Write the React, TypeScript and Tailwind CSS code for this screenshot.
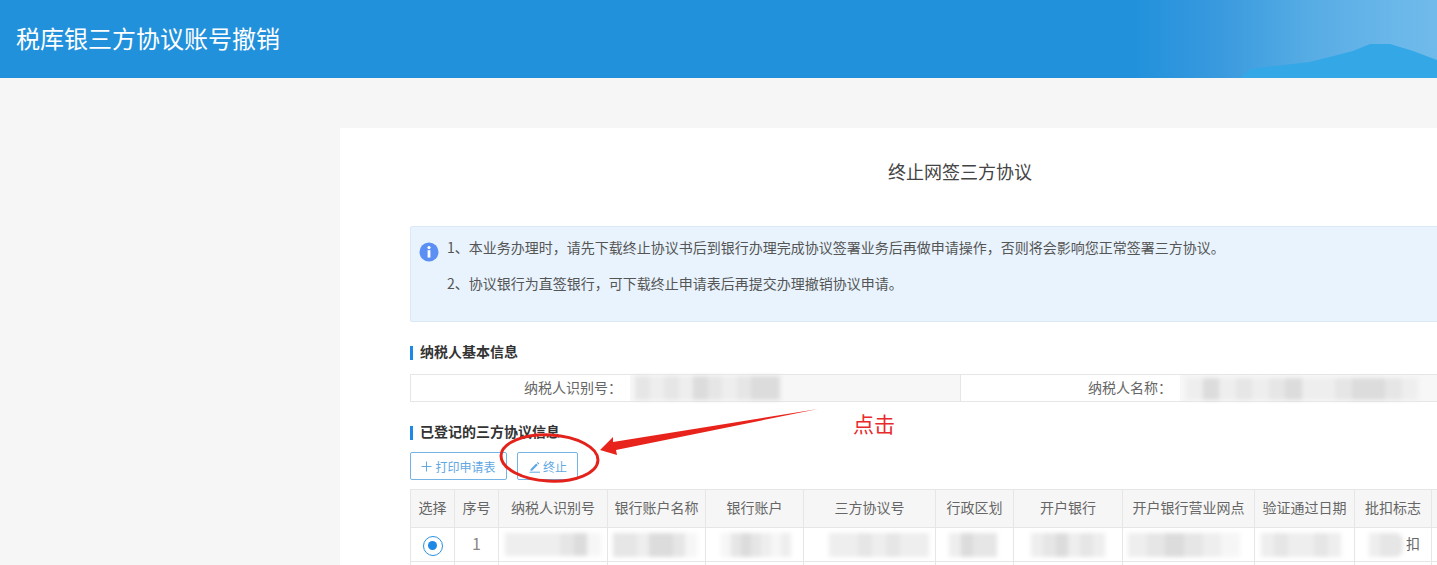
function Mosaic({ cells, className }: { cells: string[]; className: string }) {
  return (
    <div className={`flex overflow-hidden blur-[2px] ${className}`}>
      {cells.map((c, i) => (
        <div key={i} className={`flex-1 h-full ${c}`} />
      ))}
    </div>
  );
}

const L = 'bg-[#eeeeee]';
const M = 'bg-[#e6e6e6]';
const D = 'bg-[#dcdcdc]';
const W = 'bg-[#f6f6f6]';

function SectionTitle({ children }: { children: string }) {
  return (
    <div className="flex items-center h-[14px]">
      <span className="w-[3px] h-[14px] bg-[#1e88e5] mr-[7px]" />
      <span className="pb-[4px] text-[14px] leading-[14px] font-bold text-[#333]">{children}</span>
    </div>
  );
}

const columns = [
  { name: '选择', w: 'w-[44px]' },
  { name: '序号', w: 'w-[44px]' },
  { name: '纳税人识别号', w: 'w-[109px]' },
  { name: '银行账户名称', w: 'w-[98px]' },
  { name: '银行账户', w: 'w-[98px]' },
  { name: '三方协议号', w: 'w-[132px]' },
  { name: '行政区划', w: 'w-[78px]' },
  { name: '开户银行', w: 'w-[109px]' },
  { name: '开户银行营业网点', w: 'w-[132px]' },
  { name: '验证通过日期', w: 'w-[100px]' },
  { name: '批扣标志', w: 'w-[77px]' },
  { name: '', w: 'w-[79px]' },
];

const td = 'border border-[#e6e6e6] p-0 h-[34px] text-center text-[14px] text-[#666] align-middle';

export default function App() {
  return (
    <div
      className="relative w-full h-[565px] overflow-hidden bg-[#f6f6f6]"
      style={{ fontFamily: '"Noto Sans CJK SC", "Liberation Sans", sans-serif' }}
    >
      <header className="relative h-[78px] overflow-hidden flex items-center pl-[16px] bg-[linear-gradient(90deg,#2291dc_0%,#2291dc_79%,#3a9ade_85%,#56ace4_91%,#6ab7ea_97%,#6fbaea_100%)]">
        <h1 className="pb-[2px] text-[24px] leading-[76px] font-normal text-white">税库银三方协议账号撤销</h1>
        <svg className="absolute right-0 bottom-0" width="197" height="38" viewBox="1240 40 197 38">
          <path
            d="M1240 78 L1250 69 L1275 66 L1310 62 L1353 51 L1370 44 L1390 44 L1413 51 L1437 60 L1437 78 Z"
            fill="#34a7e6"
          />
        </svg>
      </header>

      <main className="pt-[50px] pl-[340px]">
        <section className="w-[1240px] h-[500px] bg-white px-[70px]">
          <h2 className="pt-[30px] h-[98px] text-center text-[18px] leading-[26px] font-normal text-[#444]">
            终止网签三方协议
          </h2>

          <div className="flex h-[96px] border border-[#dbe9f6] rounded-[2px] bg-[#e8f3fd] pl-[8px] pt-[10px]">
            <svg className="mt-[5px] shrink-0" width="20" height="20" viewBox="0 0 20 20">
              <circle cx="10" cy="10" r="9.5" fill="#5b8ff4" />
              <rect x="8.6" y="8.2" width="2.8" height="7.4" fill="#fff" />
              <circle cx="10" cy="5.6" r="1.6" fill="#fff" />
            </svg>
            <div className="ml-[8px] text-[14px] leading-[20px] text-[#555]">
              <p>1、本业务办理时，请先下载终止协议书后到银行办理完成协议签署业务后再做申请操作，否则将会影响您正常签署三方协议。</p>
              <p className="mt-[15px] pt-[1px]">2、协议银行为直签银行，可下载终止申请表后再提交办理撤销协议申请。</p>
            </div>
          </div>

          <div className="mt-[24px]">
            <SectionTitle>纳税人基本信息</SectionTitle>
          </div>

          <div className="mt-[14px] flex h-[28px] border border-[#e6e6e6] text-[14px] text-[#666]">
            <div className="w-[219px] pr-[8px] text-right leading-[24px]">纳税人识别号：</div>
            <div className="w-[330px] bg-[#f7f7f7] pl-[5px] pt-[1px]">
              <Mosaic className="w-[145px] h-[24px]" cells={[M, L, M, L, D, M, L, M, D, D]} />
            </div>
            <div className="w-[220px] border-l border-[#e6e6e6] pr-[8px] text-right leading-[24px]">纳税人名称：</div>
            <div className="flex-1 bg-[#f7f7f7] pl-[6px] pt-[3px]">
              <Mosaic className="w-[232px] h-[22px]" cells={[L, D, L, M, L, M, D, L, L, M, D, D, M, L]} />
            </div>
          </div>

          <div className="mt-[24px]">
            <SectionTitle>已登记的三方协议信息</SectionTitle>
          </div>

          <div className="mt-[12px] flex gap-[10px]">
            <button className="flex items-center justify-center w-[97px] h-[28px] pt-[1px] border border-[#73b3e5] rounded-[2px] bg-white text-[12px] text-[#5fa8e2]">
              <svg className="mr-[3px]" width="11" height="11" viewBox="0 0 11 11">
                <path d="M5.5 0.5V10.5M0.5 5.5H10.5" stroke="#5fa8e2" strokeWidth="1" fill="none" />
              </svg>
              打印申请表
            </button>
            <button className="flex items-center justify-center w-[61px] h-[28px] pt-[1px] pl-[1px] border border-[#73b3e5] rounded-[2px] bg-white text-[12px] text-[#5fa8e2]">
              <svg className="mr-[2px]" width="12" height="12" viewBox="0 0 12 12">
                <path d="M1.5 8.2L7.2 2.5L8.8 4.1L3.1 9.8H1.5Z M7.9 1.8L8.7 1L10.3 2.6L9.5 3.4Z" fill="#5fa8e2" />
                <path d="M0.5 11.2H11" stroke="#5fa8e2" strokeWidth="1" fill="none" />
              </svg>
              终止
            </button>
          </div>

          <table className="mt-[9px] w-[1100px] table-fixed">
            <colgroup>
              {columns.map((c, i) => (
                <col key={i} className={c.w} />
              ))}
            </colgroup>
            <thead>
              <tr className="bg-[#f6f6f6]">
                {columns.map((c, i) => (
                  <th key={i} className="border border-[#e6e6e6] p-0 pb-[3px] h-[38px] text-center text-[14px] font-normal text-[#666] whitespace-nowrap">
                    {c.name}
                  </th>
                ))}
              </tr>
            </thead>
            <tbody>
              <tr>
                <td className={td}>
                  <span className="inline-flex items-center justify-center align-middle w-[20px] h-[20px] rounded-full border border-[#2a93dc]">
                    <span className="w-[9px] h-[9px] rounded-full bg-[#1e88e5]" />
                  </span>
                </td>
                <td className="border border-[#e6e6e6] p-0 pb-[3px] h-[34px] text-center text-[16px] text-[#888] align-middle">1</td>
                <td className={td}>
                  <Mosaic className="ml-[6px] w-[96px] h-[23px]" cells={[L, L, L, L, M, D, W]} />
                </td>
                <td className={td}>
                  <Mosaic className="ml-[5px] w-[84px] h-[24px]" cells={[M, M, L, D, D, M, W]} />
                </td>
                <td className={td}>
                  <Mosaic className="ml-[15px] w-[70px] h-[24px]" cells={[W, M, D, M, L, W, L]} />
                </td>
                <td className={td}>
                  <Mosaic className="ml-[25px] w-[100px] h-[24px]" cells={[L, L, M, L, M, L, L]} />
                </td>
                <td className={td}>
                  <Mosaic className="ml-[13px] w-[48px] h-[24px]" cells={[L, D, M, M]} />
                </td>
                <td className={td}>
                  <Mosaic className="ml-[17px] w-[74px] h-[24px]" cells={[L, M, D, L, M, L]} />
                </td>
                <td className={td}>
                  <Mosaic className="ml-[5px] w-[112px] h-[24px]" cells={[L, M, D, M, L, W]} />
                </td>
                <td className={td}>
                  <Mosaic className="ml-[6px] w-[80px] h-[24px]" cells={[L, M, L, L, M, L]} />
                </td>
                <td className={td}>
                  <div className="flex items-center pl-[14px]">
                    <Mosaic className="w-[34px] h-[24px] rounded-r-[8px]" cells={[L, M, M]} />
                    <span className="ml-[3px] pb-[3px] text-[14px] text-[#666]">扣</span>
                  </div>
                </td>
                <td className={td} />
              </tr>
              <tr>
                {columns.map((c, i) => (
                  <td key={i} className={td} />
                ))}
              </tr>
            </tbody>
          </table>
        </section>
      </main>

      <div className="absolute left-[853px] top-[409px] text-[21px] leading-[28px] text-[#e8282a]">点击</div>

      <svg className="absolute left-0 top-0 pointer-events-none" width="1437" height="565" viewBox="0 0 1437 565">
        <ellipse
          cx="549.5"
          cy="458"
          rx="48.5"
          ry="23"
          fill="none"
          stroke="#e3231b"
          strokeWidth="3"
          transform="rotate(3 549.5 458)"
        />
        <path d="M818 409 L613 442 L613 437 L600 450 L617 455 L616 450 Z" fill="#e8231c" />
      </svg>
    </div>
  );
}
